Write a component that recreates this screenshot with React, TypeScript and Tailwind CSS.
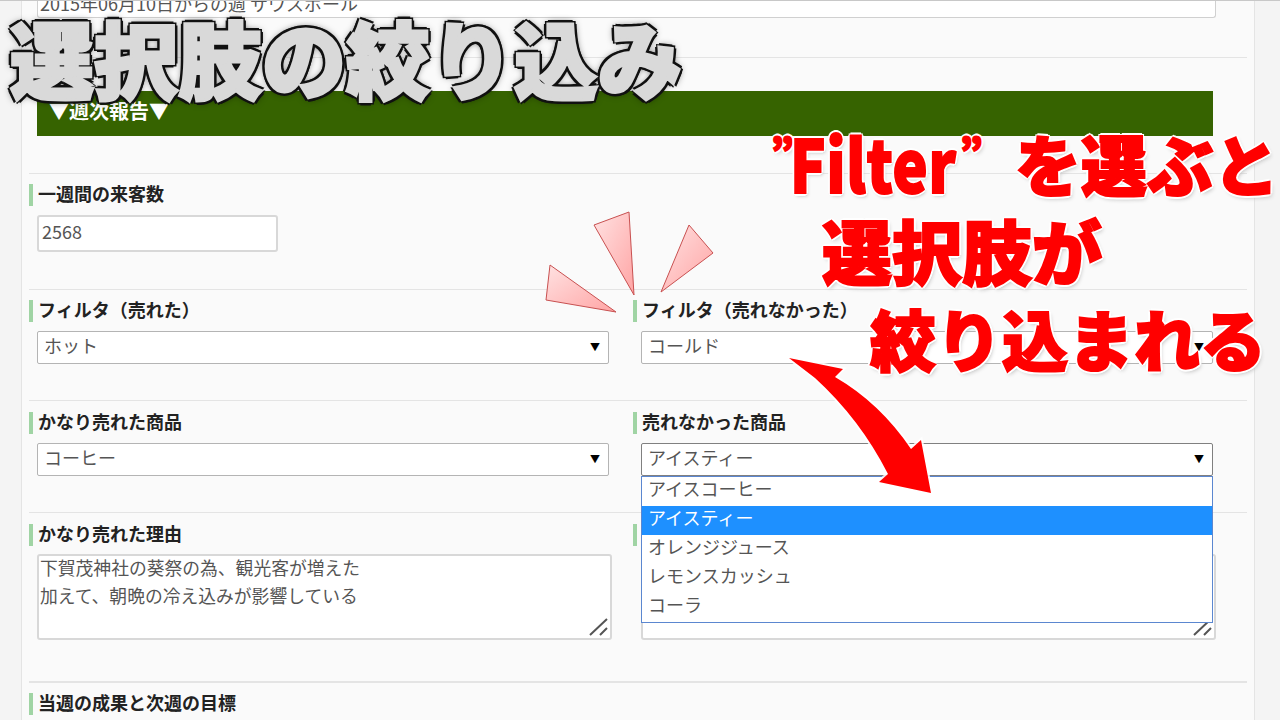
const jp = '[font-family:"Noto_Sans_CJK_JP",sans-serif]';

function Label({ children }: { children: string }) {
  return (
    <div className="flex h-[22px] items-center border-l-[4px] border-[#a0d4a4] pb-[3px] pl-[5px] text-[18px] leading-[19px] font-bold text-[#222]">
      {children}
    </div>
  );
}

function SelectBox({ value }: { value: string }) {
  return (
    <div className="ml-[8px] mt-[9px] flex h-[33px] w-[572px] items-center justify-between rounded-[2px] border border-[#b4b4b4] bg-white pb-[5px] pl-[6px] pr-[8px] text-[18px] leading-[24px] text-[#555]">
      <span>{value}</span>
      <span className="mt-[4px] text-[10px] text-black">▼</span>
    </div>
  );
}

function Dropdown() {
  const items = ['アイスコーヒー', 'アイスティー', 'オレンジジュース', 'レモンスカッシュ', 'コーラ'];
  return (
    <ul className="absolute left-[8px] top-[64px] z-10 w-[572px] border border-[#5b87d0] bg-white text-[18px] text-[#555]">
      {items.map((item, i) => (
        <li
          key={item}
          className={`h-[29px] pl-[6px] leading-[22px] ${i === 1 ? 'bg-[#1e90ff] text-white' : ''}`}
        >
          {item}
        </li>
      ))}
    </ul>
  );
}

function ResizeGrip() {
  return (
    <svg className="absolute bottom-[1px] right-[1px]" width="20" height="20" viewBox="0 0 20 20">
      <path d="M1 18 L18 2 M11 18 L18 11" stroke="#555" strokeWidth="2" fill="none" />
    </svg>
  );
}

function Burst() {
  return (
    <svg className="absolute left-0 top-0 z-20" width="1280" height="720" viewBox="0 0 1280 720">
      <defs>
        <linearGradient id="burst" x1="0" y1="0" x2="1" y2="1">
          <stop offset="0" stopColor="#ffe2e2" />
          <stop offset="1" stopColor="#ffa4a4" />
        </linearGradient>
      </defs>
      <g fill="url(#burst)" stroke="#c85050" strokeWidth="1">
        <polygon points="550,264 546,299 616,311" />
        <polygon points="594,224 629,211 634,294" />
        <polygon points="689,224 713,252 661,291" />
      </g>
    </svg>
  );
}

function Arrow() {
  return (
    <svg className="absolute left-0 top-0 z-20" width="1280" height="720" viewBox="0 0 1280 720">
      <path
        d="M789 357 L843 368 L835 376 Q880 402 911 448 L921 439 L931 492 L879 481 L888 473 Q860 418 815 377 Z"
        fill="#ff0000"
        stroke="#ffffff"
        strokeOpacity="0.85"
        strokeWidth="4"
        paintOrder="stroke"
      />
    </svg>
  );
}

export default function App() {
  return (
    <div className={`relative h-[720px] w-[1280px] overflow-hidden border-t border-[#c8c8c8] bg-[#f4f4f4] ${jp}`}>
      <div className="ml-[21px] h-[720px] w-[1234px] border-x border-[#e4e4e4] bg-[#fafafa]">
        <div className="ml-[15px] h-[17px] w-[1179px] overflow-hidden rounded-b-[3px] border border-t-0 border-[#d0d0d0] bg-white pl-[2px] text-[18px] leading-[4px] text-[#555]">
          2015年06月10日からの週 サウスポール
        </div>
        <div className="ml-[7px] mt-[39px] w-[1218px] border-t border-[#e4e4e4]" />
        <div className="ml-[15px] mt-[33px] h-[45px] w-[1176px] bg-[#366300] pl-[12px] pt-[8px] text-[20px] font-bold leading-[24px] text-white">
          ▼週次報告▼
        </div>
        <div className="ml-[7px] mt-[37px] w-[1218px] border-t border-[#e4e4e4]" />

        <div className="ml-[7px] mt-[10px]">
          <Label>一週間の来客数</Label>
          <div className="ml-[8px] mt-[9px] h-[37px] w-[241px] rounded-[3px] border-2 border-[#d8d8d8] bg-white pl-[3px] text-[18px] leading-[29px] text-[#555]">
            2568
          </div>
        </div>
        <div className="ml-[7px] mt-[37px] w-[1218px] border-t border-[#e4e4e4]" />

        <div className="ml-[7px] mt-[10px] grid grid-cols-[604px_1fr]">
          <div>
            <Label>フィルタ（売れた）</Label>
            <SelectBox value="ホット" />
          </div>
          <div>
            <Label>フィルタ（売れなかった）</Label>
            <SelectBox value="コールド" />
          </div>
        </div>
        <div className="ml-[7px] mt-[36px] w-[1218px] border-t border-[#e4e4e4]" />

        <div className="ml-[7px] mt-[11px] grid grid-cols-[604px_1fr]">
          <div>
            <Label>かなり売れた商品</Label>
            <SelectBox value="コーヒー" />
          </div>
          <div className="relative">
            <Label>売れなかった商品</Label>
            <div className="ml-[8px] mt-[9px] flex h-[33px] w-[572px] items-center justify-between rounded-[2px] border border-[#808080] bg-white pb-[5px] pl-[6px] pr-[8px] text-[18px] leading-[24px] text-[#555]">
              <span>アイスティー</span>
              <span className="mt-[4px] text-[10px] text-black">▼</span>
            </div>
            <Dropdown />
          </div>
        </div>
        <div className="ml-[7px] mt-[36px] w-[1218px] border-t border-[#e4e4e4]" />

        <div className="ml-[7px] mt-[11px] grid grid-cols-[604px_1fr]">
          <div>
            <Label>かなり売れた理由</Label>
            <div className="relative ml-[8px] mt-[8px] h-[86px] w-[575px] rounded-[3px] border-2 border-[#d8d8d8] bg-white pl-[1px] text-[17.8px] leading-[28px] text-[#555]">
              <div className="-mt-[3px]">下賀茂神社の葵祭の為、観光客が増えた</div>
              <div>加えて、朝晩の冷え込みが影響している</div>
              <ResizeGrip />
            </div>
          </div>
          <div>
            <div className="h-[22px] w-[4px] bg-[#a0d4a4]" />
            <div className="relative ml-[8px] mt-[8px] h-[86px] w-[575px] rounded-[3px] border-2 border-[#d8d8d8] bg-white">
              <ResizeGrip />
            </div>
          </div>
        </div>
        <div className="ml-[7px] mt-[41px] w-[1218px] border-t-2 border-[#e4e4e4]" />
        <div className="ml-[7px] mt-[10px]">
          <Label>当週の成果と次週の目標</Label>
        </div>
      </div>

      <Burst />
      <Arrow />

      <h1 className="absolute left-[10px] top-[6px] z-30 text-[84px] leading-[100px] font-black whitespace-nowrap text-[#d9d9d9] [-webkit-text-stroke:3px_#d9d9d9] [text-shadow:4px_0_0_#111,-4px_0_0_#111,0_4px_0_#111,0_-4px_0_#111,3px_3px_0_#111,-3px_3px_0_#111,3px_-3px_0_#111,-3px_-3px_0_#111,0_0_8px_#000]">
        選択肢の絞り込み
      </h1>
      <div className="absolute left-[770px] top-[121px] z-30 font-black whitespace-nowrap text-[#ff0000] [-webkit-text-stroke:2px_#ff0000] [text-shadow:3px_0_0_#fff,-3px_0_0_#fff,0_3px_0_#fff,0_-3px_0_#fff,2px_2px_0_#fff,-2px_2px_0_#fff,2px_-2px_0_#fff,-2px_-2px_0_#fff,2px_3px_4px_#bbb]">
        <div className="flex h-[80px] items-center leading-[80px]">
          <div className="flex w-[245px] items-center">
            <span className="-mt-[26px] ml-[1px] w-[19px] text-[36px] leading-[40px]">”</span>
            <span className="inline-block w-[170px] origin-left scale-x-[.82] text-[72px] tracking-[1px]">Filter</span>
            <span className="-mt-[26px] text-[36px] leading-[40px]">”</span>
          </div>
          <span className="text-[66px]">を選ぶと</span>
        </div>
        <div className="ml-[52px] mt-[8px] text-[70px] leading-[80px]">選択肢が</div>
        <div className="ml-[100px] mt-[7px] text-[66px] leading-[80px]">絞り込まれる</div>
      </div>
    </div>
  );
}
